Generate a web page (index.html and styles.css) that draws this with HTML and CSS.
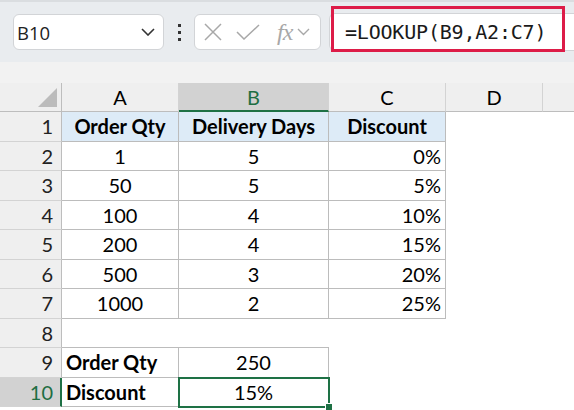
FILE: index.html
```html
<!DOCTYPE html>
<html lang="en">
<head>
    <meta charset="UTF-8">
    <title>LOOKUP</title>
    <link rel="stylesheet" href="styles.css">
</head>
<body>

    <!-- formula bar -->
    <div class="toolbar">
        <div class="namebox">
            <span>B10</span>
            <svg width="14" height="8" viewBox="0 0 14 8"><path d="M1 1 L7 7 L13 1" fill="none" stroke="#333" stroke-width="1.6"/></svg>
        </div>
        <div class="dots"><i></i><i></i><i></i></div>
        <div class="fnbox">
            <svg width="18" height="18" viewBox="0 0 18 18"><path d="M1 1 L17 17 M17 1 L1 17" stroke="#a8a8a8" stroke-width="1.5"/></svg>
            <svg width="24" height="16" viewBox="0 0 24 16"><path d="M1 8 L8 15 L23 1" fill="none" stroke="#a8a8a8" stroke-width="1.5"/></svg>
            <span class="fx">fx</span>
            <svg width="13" height="8" viewBox="0 0 13 8"><path d="M1 1 L6.5 6.5 L12 1" fill="none" stroke="#a8a8a8" stroke-width="1.4"/></svg>
        </div>
        <div class="formula">
            <span class="formula-text">=LOOKUP(B9,A2:C7)</span>
        </div>
    </div>

    <div class="gap-band"></div>

    <!-- sheet -->
    <div class="sheet">
        <div class="corner"><span class="tri"></span></div>
        <div class="colhead">A</div>
        <div class="colhead sel">B</div>
        <div class="colhead">C</div>
        <div class="colhead">D</div>
        <div class="colhead last"></div>

        <div class="rowhead">1</div>
        <div class="cell b hd">Order Qty</div>
        <div class="cell b hd">Delivery Days</div>
        <div class="cell b hd">Discount</div>
        <div class="cell"></div><div class="cell"></div>

        <div class="rowhead">2</div>
        <div class="cell b">1</div><div class="cell b">5</div><div class="cell b r">0%</div>
        <div class="cell"></div><div class="cell"></div>

        <div class="rowhead">3</div>
        <div class="cell b">50</div><div class="cell b">5</div><div class="cell b r">5%</div>
        <div class="cell"></div><div class="cell"></div>

        <div class="rowhead">4</div>
        <div class="cell b">100</div><div class="cell b">4</div><div class="cell b r">10%</div>
        <div class="cell"></div><div class="cell"></div>

        <div class="rowhead">5</div>
        <div class="cell b">200</div><div class="cell b">4</div><div class="cell b r">15%</div>
        <div class="cell"></div><div class="cell"></div>

        <div class="rowhead">6</div>
        <div class="cell b">500</div><div class="cell b">3</div><div class="cell b r">20%</div>
        <div class="cell"></div><div class="cell"></div>

        <div class="rowhead">7</div>
        <div class="cell b">1000</div><div class="cell b">2</div><div class="cell b r">25%</div>
        <div class="cell"></div><div class="cell"></div>

        <div class="rowhead">8</div>
        <div class="cell bb"></div><div class="cell bb"></div>
        <div class="cell"></div><div class="cell"></div><div class="cell"></div>

        <div class="rowhead">9</div>
        <div class="cell b lbl">Order Qty</div><div class="cell b">250</div>
        <div class="cell"></div><div class="cell"></div><div class="cell"></div>

        <div class="rowhead sel">10</div>
        <div class="cell b lbl">Discount</div><div class="cell b active">15%</div>
        <div class="cell"></div><div class="cell"></div><div class="cell"></div>
    </div>

</body>
</html>
```

FILE: styles.css
```css
body {
    margin: 0;
    width: 574px;
    height: 410px;
    overflow: hidden;
    background-color: #ffffff;
    font-family: Lato, "Liberation Sans", sans-serif;
}

.toolbar {
    display: flex;
    align-items: center;
    height: 62px;
    box-sizing: border-box;
    padding-left: 13px;
    background-color: #e9ecef;
    border-top: 2px solid #dadde0;
}

.namebox {
    display: flex;
    align-items: center;
    justify-content: space-between;
    width: 151px;
    height: 36px;
    box-sizing: border-box;
    padding: 0 8px 0 3px;
    background-color: #ffffff;
    border: 1px solid #d2d4d7;
    border-radius: 6px;
    font-family: "Open Sans", sans-serif;
    font-size: 18.5px;
    color: #222222;
}

.dots {
    display: flex;
    flex-direction: column;
    gap: 4px;
    margin: 0 13px 0 14px;
}

.dots i {
    display: block;
    width: 3px;
    height: 3px;
    background-color: #333333;
}

.fnbox {
    display: flex;
    align-items: center;
    width: 127px;
    height: 36px;
    box-sizing: border-box;
    padding-left: 9px;
    background-color: #ffffff;
    border: 1px solid #d2d4d7;
    border-radius: 6px;
}

.fnbox svg:nth-child(2) {
    margin-left: 14px;
}

.fx {
    margin-left: 17px;
    font-family: "Liberation Serif", serif;
    font-style: italic;
    font-size: 24px;
    color: #a8a8a8;
    letter-spacing: -1px;
}

.fnbox svg:last-child {
    margin-left: 5px;
}

.formula {
    position: relative;
    flex: 1;
    height: 36px;
    margin-left: 8px;
    display: flex;
    align-items: center;
    padding-left: 15px;
    background-color: #ffffff;
    border: 1px solid #d2d4d7;
    border-right: none;
    border-radius: 6px 0 0 6px;
}

/* red highlight around the formula */
.formula::after {
    content: "";
    position: absolute;
    left: 1px;
    top: -8px;
    width: 234px;
    height: 46px;
    box-sizing: border-box;
    border: 3px solid #dd1c48;
}

.formula-text {
    font-family: "DejaVu Sans Mono", "Liberation Mono", monospace;
    font-size: 20px;
    color: #1a1a1a;
    letter-spacing: -0.2px;
}

.gap-band {
    height: 21px;
    background-color: #f2f2f2;
}

.sheet {
    display: grid;
    grid-template-columns: 62px 117px 150px 117px 97px 1fr;
    grid-template-rows: 29px repeat(10, 29.5px);
    font-size: 20px;
    color: #000000;
}

.corner,
.colhead {
    position: relative;
    background-color: #efefef;
    border-bottom: 1px solid #bdbdbd;
    display: flex;
    align-items: center;
    justify-content: center;
    box-sizing: border-box;
}

.corner {
    border-right: 1px solid #bdbdbd;
}

.colhead {
    border-right: 1px solid #d3d3d3;
}

.colhead.last {
    border-right: none;
}

.colhead.sel {
    background-color: #d2d2d2;
    color: #1e6e43;
    border-bottom: 2px solid #1e7145;
}

.tri {
    position: absolute;
    right: 4px;
    bottom: 4px;
    width: 0;
    height: 0;
    border-left: 19px solid transparent;
    border-bottom: 19px solid #bcbcbc;
}

.rowhead {
    background-color: #efefef;
    border-right: 1px solid #bdbdbd;
    border-bottom: 1px solid #d3d3d3;
    box-sizing: border-box;
    display: flex;
    align-items: center;
    justify-content: flex-end;
    padding-right: 8px;
    color: #222222;
}

.rowhead.sel {
    background-color: #d2d2d2;
    color: #1e6e43;
    border-right: 2px solid #1e7145;
    padding-right: 7px;
}

.cell {
    box-sizing: border-box;
    display: flex;
    align-items: center;
    justify-content: center;
    white-space: nowrap;
}

.cell.b {
    border-right: 1px solid #bcbcbc;
    border-bottom: 1px solid #bcbcbc;
}

.cell.bb {
    border-bottom: 1px solid #bcbcbc;
}

.cell.hd {
    background-color: #ddebf7;
    font-weight: bold;
}

.cell.r {
    justify-content: flex-end;
    padding-right: 4px;
}

.cell.lbl {
    justify-content: flex-start;
    padding-left: 4px;
    font-weight: bold;
}

.cell.active {
    position: relative;
    outline: 2px solid #1e7145;
    outline-offset: -1px;
}

.cell.active::after {
    content: "";
    position: absolute;
    right: -5px;
    bottom: -5px;
    width: 6px;
    height: 6px;
    background-color: #1e7145;
    border: 1px solid #ffffff;
}
```
